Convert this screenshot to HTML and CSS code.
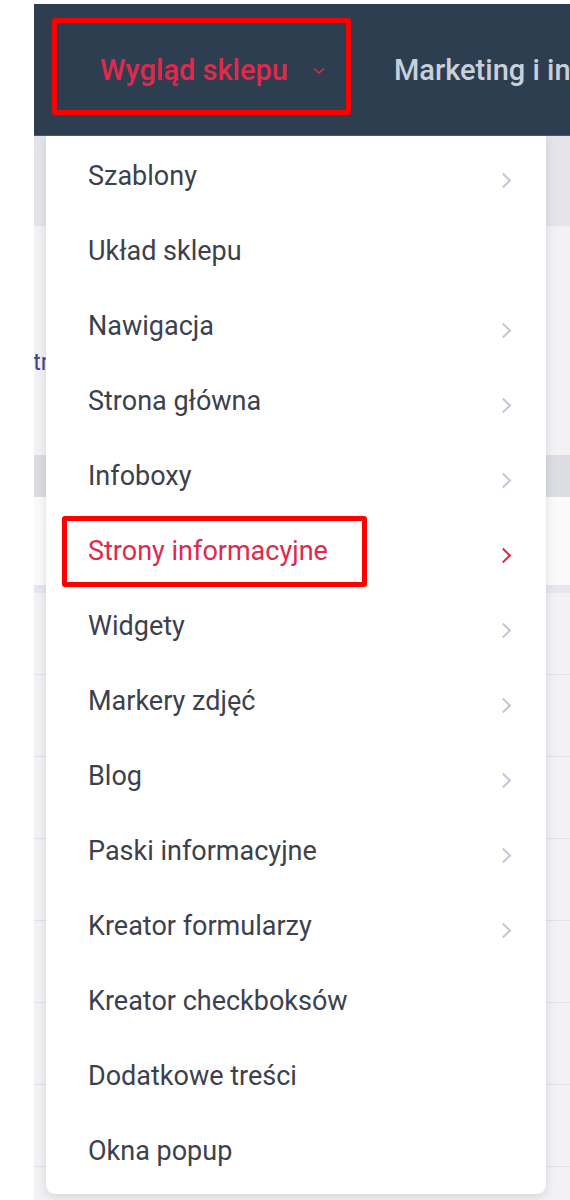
FILE: index.html
```html
<!DOCTYPE html>
<html lang="pl">

<head>
    <meta charset="UTF-8">
    <meta name="viewport" content="width=device-width, initial-scale=1.0">
    <title>Wygląd sklepu</title>
    <link rel="stylesheet" href="styles.css">
</head>

<body>
    <div class="page">
        <header class="topbar">
            <div class="nav-item active">
                <span>Wygląd sklepu</span>
                <svg class="caret" width="14" height="10" viewBox="0 0 14 10">
                    <path d="M2 2.5l5 4.5 5-4.5" fill="none" stroke="currentColor" stroke-width="1.6" />
                </svg>
                <div class="mark mark-nav"></div>
            </div>
            <div class="nav-item">Marketing i in</div>
        </header>

        <div class="content">
            <!-- tabela pod menu -->
            <div class="bg-row bg-top"></div>
            <div class="bg-row bg-filter"><span class="cut">tr</span></div>
            <div class="bg-row bg-head"></div>
            <div class="bg-row bg-light"></div>
            <div class="bg-row bg-line"></div>
            <div class="bg-row bg-line"></div>
            <div class="bg-row bg-line"></div>
            <div class="bg-row bg-line"></div>
            <div class="bg-row bg-line"></div>
            <div class="bg-row bg-line"></div>
            <div class="bg-row bg-line"></div>
            <div class="bg-row bg-line"></div>

            <ul class="dropdown">
                <li class="menu-item has-sub">Szablony</li>
                <li class="menu-item">Układ sklepu</li>
                <li class="menu-item has-sub">Nawigacja</li>
                <li class="menu-item has-sub">Strona główna</li>
                <li class="menu-item has-sub">Infoboxy</li>
                <li class="menu-item has-sub active"><span class="label">Strony informacyjne<span class="mark mark-item"></span></span></li>
                <li class="menu-item has-sub">Widgety</li>
                <li class="menu-item has-sub">Markery zdjęć</li>
                <li class="menu-item has-sub">Blog</li>
                <li class="menu-item has-sub">Paski informacyjne</li>
                <li class="menu-item has-sub">Kreator formularzy</li>
                <li class="menu-item">Kreator checkboksów</li>
                <li class="menu-item">Dodatkowe treści</li>
                <li class="menu-item">Okna popup</li>
            </ul>
        </div>
    </div>
</body>

</html>
```

FILE: styles.css
```css
* {
    box-sizing: border-box;
}

body {
    margin: 0;
    background-color: #ffffff;
    font-family: Roboto, 'Noto Sans', sans-serif;
    color: #3b404b;
}

.page {
    margin: 4px 0 0 34px;
    height: 1196px;
    overflow: hidden;
}

.topbar {
    height: 132px;
    background-color: #2d3e50;
    border-bottom: 1px solid #4a5868;
    display: flex;
    align-items: center;
    padding-left: 66px;
    gap: 68px;
    white-space: nowrap;
}

.nav-item {
    position: relative;
    display: flex;
    align-items: center;
    gap: 24px;
    font-size: 29px;
    font-weight: 500;
    color: #c9d0dc;
}

.nav-item.active {
    color: #e0294c;
}

.caret {
    margin-top: 2px;
}

.mark {
    position: absolute;
    border: 5px solid #ff0000;
    border-radius: 3px;
}

.mark-nav {
    left: -48px;
    top: -35px;
    width: 299px;
    height: 97px;
}

.content {
    position: relative;
    background-color: #f2f2f4;
}

.bg-row {
    height: 82px;
    border-bottom: 1px solid #e1e1e7;
}

.bg-top {
    height: 90px;
    background-color: #e4e4ea;
    border: none;
}

.bg-filter {
    height: 229px;
    background-color: #f2f2f4;
    border: none;
    padding-top: 122px;
    font-size: 24px;
    color: #4b4590;
}

.cut {
    margin-left: -1px;
}

.bg-head {
    height: 42px;
    background-color: #dcdce3;
    border: none;
}

.bg-light {
    height: 96px;
    background-color: #fafafb;
    border-bottom: 8px solid #e6e6ec;
}

.dropdown {
    position: absolute;
    left: 12px;
    top: 0;
    width: 500px;
    margin: 0;
    padding: 2px 0 6px;
    list-style: none;
    background-color: #ffffff;
    border-radius: 0 0 9px 9px;
    box-shadow: 0 3px 10px rgba(40, 40, 60, 0.14);
}

.menu-item {
    height: 75px;
    display: flex;
    align-items: center;
    padding: 0 34px 0 42px;
    font-size: 27px;
    color: #3c414d;
    white-space: nowrap;
}

.menu-item.has-sub::after {
    content: '';
    margin-left: auto;
    width: 9px;
    height: 9px;
    border-top: 2px solid #c3c8d6;
    border-right: 2px solid #c3c8d6;
    transform: rotate(45deg);
    margin-right: 3px;
    margin-top: 10px;
}

.menu-item.active {
    color: #e0294c;
}

.menu-item.active::after {
    border-color: #e0294c;
}

.label {
    position: relative;
}

.mark-item {
    left: -26px;
    top: -19px;
    width: 305px;
    height: 71px;
}
```
